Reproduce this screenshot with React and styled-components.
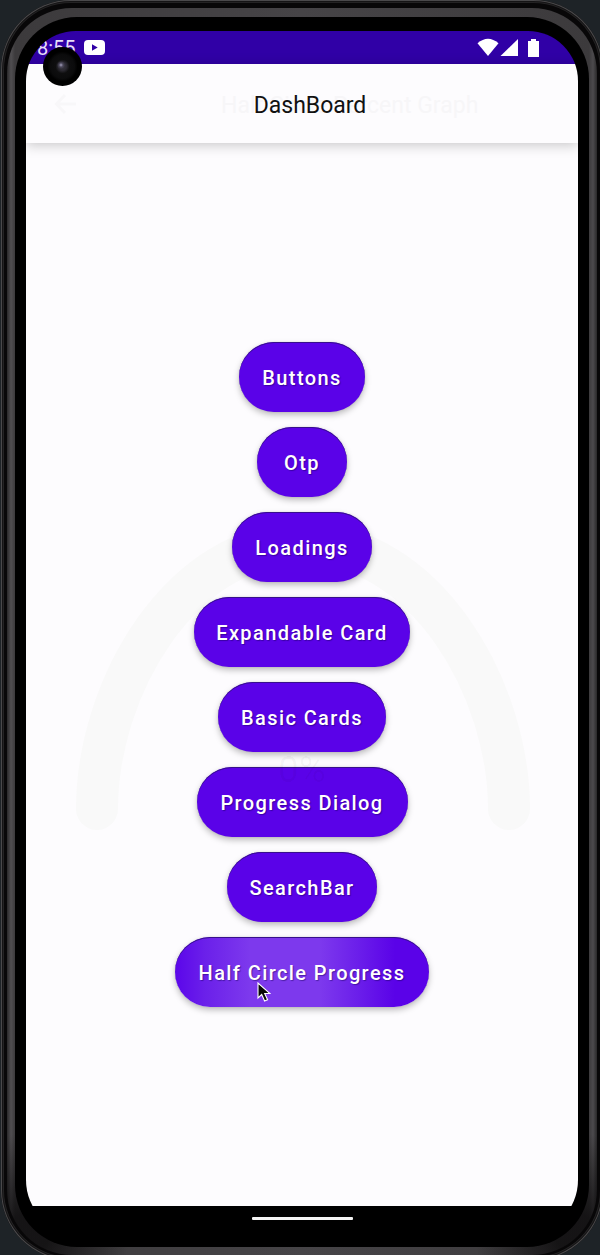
import React from "react";
import styled, { createGlobalStyle } from "styled-components";

const GlobalStyle = createGlobalStyle`
  * { box-sizing: border-box; }
  body { margin: 0; background: #1e2327; }
`;

const Stage = styled.div`
  width: 600px;
  height: 1255px;
  overflow: hidden;
  background: #1e2327;
  font-family: Roboto, sans-serif;
`;

const OuterEdge = styled.div`
  width: 602px;
  height: 1260px;
  margin-left: 1px;
  padding: 8px 6px 5px;
  border-radius: 70px;
  background: #080708;
  box-shadow: inset 0 0 0 1px #4a494b, inset 0 0 0 2px #151415, inset 0 0 0 3px #242324;
`;

const Rim = styled.div`
  width: 590px;
  height: 1247px;
  padding: 9px 8px 8px;
  border-radius: 65px;
  background:
    radial-gradient(circle at 22px 1225px, rgba(8, 7, 8, 0.75) 20px, rgba(8, 7, 8, 0) 100px),
    radial-gradient(circle at 568px 1225px, rgba(8, 7, 8, 0.75) 20px, rgba(8, 7, 8, 0) 100px),
    linear-gradient(90deg, #2a292a 0, #504e51 4px, #3c3a3c 8px, #464447 50%, #3c3a3c 582px, #4c4a4d 586px, #2a292a 590px);
`;

const Bezel = styled.div`
  width: 574px;
  height: 1230px;
  padding: 14px 11px 0;
  border-radius: 62px;
  background: #000;
  position: relative;
`;

const Screen = styled.div`
  width: 552px;
  height: 1203px;
  display: flex;
  flex-direction: column;
  overflow: hidden;
  border-radius: 50px 50px 54px 54px;
  background: #000;
`;

const StatusBar = styled.div`
  height: 33px;
  flex: none;
  display: flex;
  justify-content: space-between;
  align-items: center;
  padding: 0 38px 0 11px;
  background: #3000a6;
`;

const StatusGroup = styled.div`
  display: flex;
  align-items: center;
  gap: 8px;
`;

const Clock = styled.span`
  width: 39px;
  color: #e7def8;
  font-size: 20px;
  line-height: 24px;
  padding-top: 1px;
`;

const Camera = styled.div`
  position: absolute;
  z-index: 2;
  left: 28px;
  top: 30px;
  width: 39px;
  height: 39px;
  border-radius: 50%;
  background:
    radial-gradient(circle at 18px 18px, #a5a1bd 0, rgba(90, 86, 110, 0.6) 2px, transparent 4px),
    radial-gradient(circle, #3a3742 0, #2b2931 4px, #0e0e0f 7px, #0b0b0c 12px, #000 15px);
`;

const AppBar = styled.header`
  position: relative;
  z-index: 1;
  height: 79px;
  flex: none;
  display: grid;
  place-items: center;
  padding: 5px 0 0 16px;
  background: #fdfcfe;
  box-shadow: 0 2px 12px rgba(0, 0, 0, 0.22);
`;

const Title = styled.h1`
  position: relative;
  margin: 0;
  font-size: 23px;
  font-weight: 400;
  line-height: 28px;
  color: #111;
`;

const GhostArrow = styled.svg`
  position: absolute;
  left: 28px;
  top: 28px;
`;

const GhostTitle = styled.span`
  position: absolute;
  left: 195px;
  top: 28px;
  font-size: 23px;
  line-height: 28px;
  white-space: nowrap;
  color: #f7f6f8;
`;

const Content = styled.main`
  position: relative;
  height: 1063px;
  flex: none;
  display: flex;
  flex-direction: column;
  align-items: center;
  gap: 15px;
  padding-top: 199px;
  background: #fdfcfe;
`;

const GhostArc = styled.svg`
  position: absolute;
  left: 0;
  top: 357px;
`;

const GhostPercent = styled.span`
  position: absolute;
  left: 252px;
  top: 605px;
  font-size: 37px;
  line-height: 44px;
  color: rgba(0, 0, 0, 0.035);
`;

const PillButton = styled.button`
  position: relative;
  flex: none;
  width: ${(p) => p.$width}px;
  height: 70px;
  padding: 2px 1px 0 1px;
  border: 0;
  border-radius: 35px;
  font: 500 20px/24px Roboto, sans-serif;
  letter-spacing: 1.4px;
  white-space: nowrap;
  color: #fff;
  text-shadow: 1px 1px 1px rgba(20, 0, 80, 0.45);
  background: ${(p) =>
    p.$pressed
      ? "linear-gradient(90deg, #5b06ea 0, #6b20ea 30px, #7d39ed 75px, #7d39ed 145px, #6a1dea 185px, #5a02e8 220px)"
      : "#5a02e8"};
  box-shadow: inset 0 1px 0 #37108c, 0 3px 6px rgba(0, 0, 0, 0.26), 0 0 2px rgba(0, 0, 0, 0.12);
`;

const Pointer = styled.svg`
  position: absolute;
  left: 82px;
  top: 45px;
`;

const NavBar = styled.footer`
  flex: 1;
  display: flex;
  justify-content: center;
  padding-top: 11px;
  background: #000;
`;

const Handle = styled.div`
  width: 101px;
  height: 3px;
  border-radius: 1px;
  background: #f4f4f4;
`;

const items = [
  { label: "Buttons", width: 126 },
  { label: "Otp", width: 90 },
  { label: "Loadings", width: 140 },
  { label: "Expandable Card", width: 216 },
  { label: "Basic Cards", width: 168 },
  { label: "Progress Dialog", width: 211 },
  { label: "SearchBar", width: 150 },
  { label: "Half Circle Progress", width: 254, pressed: true },
];

export default function App() {
  return (
    <Stage>
      <GlobalStyle />
      <OuterEdge>
        <Rim>
          <Bezel>
            <Screen>
              <StatusBar>
                <StatusGroup>
                  <Clock>8:55</Clock>
                  <svg width="21" height="15" viewBox="0 0 21 15">
                    <rect width="21" height="15" rx="4" fill="#fff" />
                    <path d="M8 4.3v6.4l5.7-3.2z" fill="#3000a6" />
                  </svg>
                </StatusGroup>
                <StatusGroup>
                  <svg width="63" height="20" viewBox="0 0 63 20" fill="#fff">
                    <path d="M.5 5.2Q11-3.800 21.500 5.200L11 18z" />
                    <path d="M41 1v17H23.500z" />
                    <path d="M51 3h3V1h5v2h3v16H51z" />
                  </svg>
                </StatusGroup>
              </StatusBar>
              <AppBar>
                <GhostArrow width="24" height="24" viewBox="0 0 24 24" fill="none" stroke="#f8f7f9" strokeWidth="3">
                  <path d="M22 12H3M11 3L2.500 12L11 21" />
                </GhostArrow>
                <GhostTitle>Half Circle Percent Graph</GhostTitle>
                <Title>DashBoard</Title>
              </AppBar>
              <Content>
                <GhostArc width="552" height="350" viewBox="0 0 552 350" fill="none">
                  <path d="M71 309C71 188 155 43 277 43S483 188 483 309" stroke="#f9f9f9" strokeWidth="42" strokeLinecap="round" />
                </GhostArc>
                {items.map((item) => (
                  <PillButton key={item.label} $width={item.width} $pressed={item.pressed}>
                    {item.label}
                    {item.pressed && (
                      <Pointer width="14" height="21" viewBox="0 0 14 21">
                        <path d="M1 1v15l3.700-3.500 2.900 6.500 3-1.300-2.900-6.200H13z" fill="#080808" stroke="#fff" strokeWidth="1.100" />
                      </Pointer>
                    )}
                  </PillButton>
                ))}
                <GhostPercent>0%</GhostPercent>
              </Content>
              <NavBar>
                <Handle />
              </NavBar>
            </Screen>
            <Camera />
          </Bezel>
        </Rim>
      </OuterEdge>
    </Stage>
  );
}
